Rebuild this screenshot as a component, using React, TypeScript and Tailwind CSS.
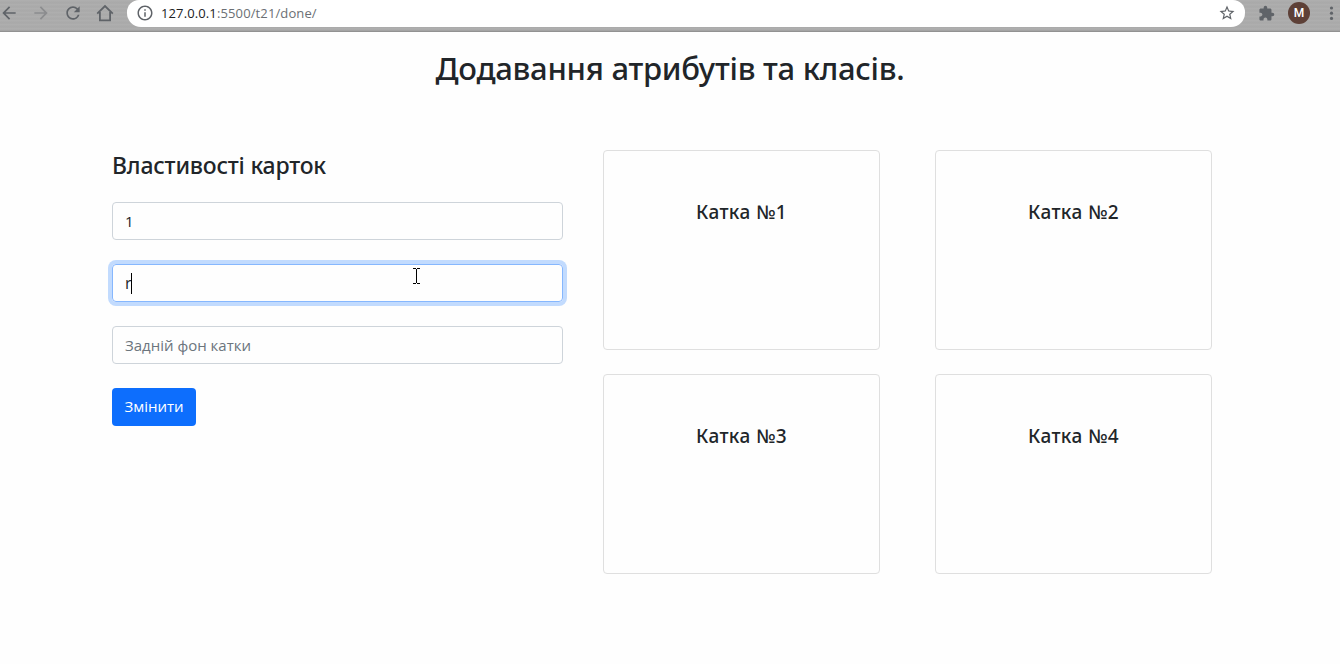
import React from "react";
import {
  MdArrowBack,
  MdArrowForward,
  MdExtension,
  MdInfoOutline,
  MdRefresh,
  MdStarBorder,
} from "react-icons/md";

function HomeIcon() {
  return (
    <svg width="20" height="20" viewBox="0 0 20 20" fill="none" stroke="#5f6368" strokeWidth="1.8">
      <path d="M2.2 10.6 L10 3 L17.8 10.6 M4.9 9 V17.3 H15.1 V9" />
    </svg>
  );
}

function Toolbar() {
  return (
    <header className="flex h-8 items-start border-b border-[#929292] bg-[#ababab] bg-[repeating-linear-gradient(180deg,#aeaeae_0px,#aeaeae_1px,#a9a9a9_2px,#ababab_4px)] text-[#5f6368] shadow-[inset_0_-1px_0_#a4a4a4]">
      <div className="flex h-[26px] w-[127px] shrink-0 items-center">
        <MdArrowBack size={20} className="-ml-px" />
        <MdArrowForward size={20} className="ml-3 text-[#8b8c8e]" />
        <MdRefresh size={20} className="ml-3" />
        <span className="ml-3">
          <HomeIcon />
        </span>
      </div>
      <div className="flex h-[27px] w-[1118px] shrink-0 items-center rounded-b-[14px] rounded-t-[12px] bg-white pl-[9px] pr-[9px] pb-px">
        <MdInfoOutline size={18} />
        <span className="ml-[7px] flex-1 whitespace-nowrap font-['Open_Sans','Noto_Sans',sans-serif] text-[13px] leading-[18px] tracking-[0.12px] text-[#6b6f74]">
          <span className="text-[#202124]">127.0.0.1</span>:5500/t21/done/
        </span>
        <MdStarBorder size={18} />
      </div>
      <div className="flex h-[26px] flex-1 items-center pl-[13px]">
        <MdExtension size={17} />
        <span className="ml-[13px] flex size-[22px] shrink-0 items-center justify-center rounded-full bg-[#5d4037] font-[Roboto,sans-serif] text-xs font-medium text-white">
          M
        </span>
        <svg className="ml-[18px] shrink-0" width="8" height="18" viewBox="0 0 8 18" fill="#5f6368">
          <circle cx="3.5" cy="4" r="1.6" />
          <circle cx="3.5" cy="9.2" r="1.6" />
          <circle cx="3.5" cy="14.4" r="1.6" />
        </svg>
      </div>
    </header>
  );
}

function TextCursor() {
  return (
    <svg
      className="absolute left-[300px] top-[3px]"
      width="7"
      height="17"
      viewBox="0 0 7 17"
      fill="none"
      stroke="#000"
      shapeRendering="crispEdges"
    >
      <path d="M0 .5H3M4 .5H7M3.5 1V15M0 15.5H3M4 15.5H7" />
    </svg>
  );
}

const cards = [1, 2, 3, 4];

export default function App() {
  return (
    <div className="h-[664px] overflow-hidden bg-[#fefefe] font-['Open_Sans','Noto_Sans',sans-serif] text-[#212529]">
      <Toolbar />
      <main>
        <h1 className="flex h-[118px] justify-center pt-[17px] font-['Noto_Sans',sans-serif] text-[31px] leading-[38px] font-medium tracking-[-0.26px] whitespace-nowrap">
          <span>Додавання атрибутів та класів.</span>
        </h1>
        <div className="flex pl-28">
          <section className="flex w-[451px] flex-col items-start">
            <h2 className="h-[52px] font-['Noto_Sans',sans-serif] text-[23px] leading-[30px] font-medium tracking-[-0.2px] whitespace-nowrap">
              Властивості карток
            </h2>
            <div className="flex h-[38px] w-full items-center rounded border border-[#ced4da] px-3 text-base">
              <span className="text-[15px]">1</span>
            </div>
            <div className="relative mt-6 flex h-[38px] w-full items-center rounded border border-[#86b7fe] px-3 text-base shadow-[0_0_0_4px_#c2dbfe]">
              <span>r</span>
              <span className="-ml-px h-[21px] w-px bg-black" />
              <TextCursor />
            </div>
            <div className="mt-6 flex h-[38px] w-full items-center rounded border border-[#ced4da] px-3 pb-px text-[#6c757d]">
              <span className="text-[15px] leading-6">Задній фон катки</span>
            </div>
            <button className="mt-6 h-[38px] w-[84px] rounded bg-[#0d6efd] pb-px text-[15px] whitespace-nowrap text-white">
              Змінити
            </button>
          </section>
          <section className="ml-10 grid grid-cols-[277px_277px] gap-x-[55px] gap-y-6">
            {cards.map((n) => (
              <article
                key={n}
                className="flex h-[200px] justify-center rounded border border-[#dfdfdf] pt-[49px]"
              >
                <h3 className="font-['Noto_Sans',sans-serif] text-[19px] leading-6 font-medium tracking-[0.4px] whitespace-nowrap">
                  Катка №{n}
                </h3>
              </article>
            ))}
          </section>
        </div>
      </main>
    </div>
  );
}
